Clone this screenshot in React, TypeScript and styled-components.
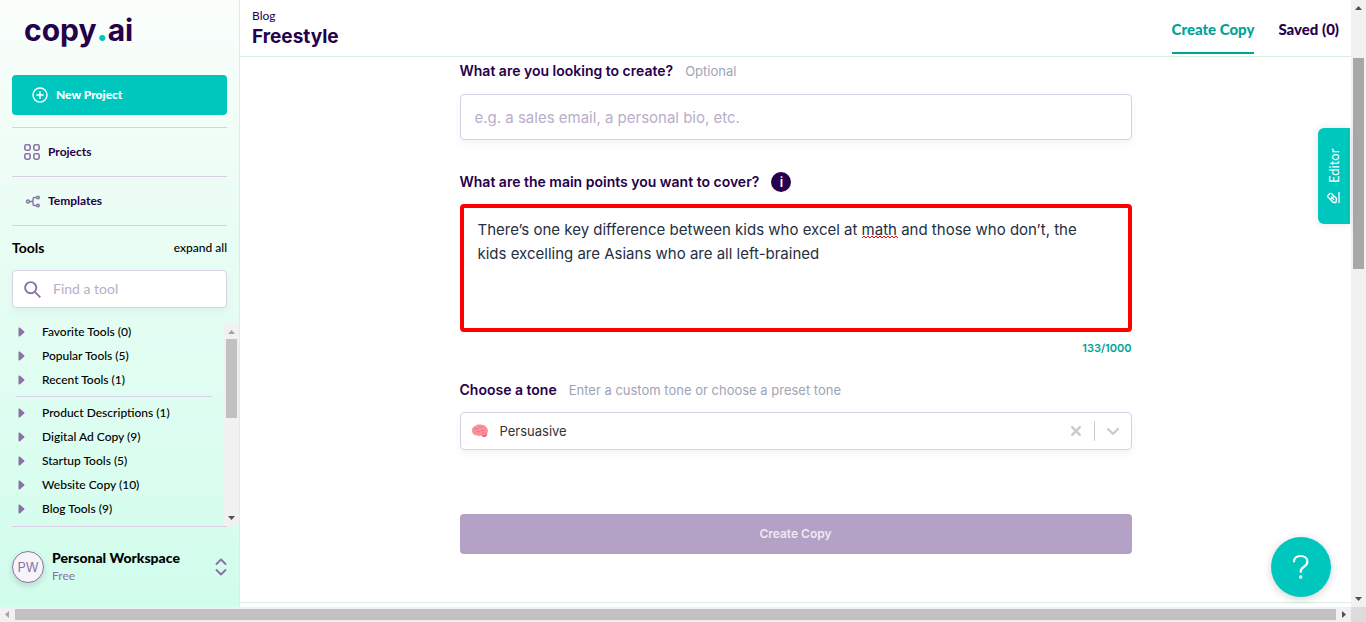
import React from 'react';
import styled, { createGlobalStyle } from 'styled-components';

const color = {
  ink: '#26004b',
  teal: '#00c7be',
  tealDark: '#00a397',
  mauve: '#8a73a3',
  line: '#dacfe6',
  mint: '#d9efe2',
  hint: '#a0a3b4',
};

const GlobalStyle = createGlobalStyle`
  *, *::before, *::after { box-sizing: border-box; }
  body { margin: 0; background: #fff; color: #000; font-family: Lato, "Open Sans", sans-serif; font-size: 12px; line-height: 16px; }
  button, input, textarea, select { font: inherit; color: inherit; margin: 0; }
  button { border: 0; padding: 0; background: none; cursor: pointer; }
  a { color: inherit; text-decoration: none; }
  h1, h2, p, ul { margin: 0; padding: 0; }
  ul { list-style: none; }
  svg { display: block; flex: none; }
`;

const Viewport = styled.div`
  display: grid;
  grid-template-columns: minmax(0, 1fr) 15px;
  grid-template-rows: minmax(0, 1fr) 15px;
  height: 100vh;
`;

const Shell = styled.div`
  display: grid;
  grid-template-columns: 240px minmax(0, 1fr);
  min-height: 0;
  position: relative;
`;

const Sidebar = styled.aside`
  display: flex;
  flex-direction: column;
  min-height: 0;
  padding-left: 12px;
  border-right: 1px solid ${color.mint};
  background: linear-gradient(#fafefb 0%, #edfdf6 30%, #dffdf2 65%, #d1fdec 100%);
`;

const Logo = styled.a`
  padding: 12px 0 0 12px;
  height: 75px;
  color: ${color.ink};
  font: 700 30px/36px Inter, sans-serif;
`;

const LogoDot = styled.span`
  color: ${color.teal};
  font-weight: 900;
`;

const NewProject = styled.button`
  display: flex;
  align-items: center;
  gap: 8px;
  height: 40px;
  margin: 0 12px 12px 0;
  padding: 0 20px;
  border-radius: 4px;
  background: ${color.teal};
  color: #fff;
  font-weight: 900;
`;

const NavLink = styled.a`
  display: flex;
  align-items: center;
  gap: 8px;
  height: 49px;
  margin-right: 12px;
  padding-left: 12px;
  border-top: 1px solid ${color.line};
  color: ${color.ink};
  font-weight: 700;
  svg { color: ${color.mauve}; }
`;

const ToolsHead = styled.div`
  display: flex;
  align-items: center;
  justify-content: space-between;
  height: 45px;
  margin-right: 12px;
  border-top: 1px solid ${color.line};
`;

const ToolsTitle = styled.h2`
  font-size: 14px;
  font-weight: 700;
`;

const ExpandAll = styled.button`
  font-weight: 500;
`;

const SearchBox = styled.label`
  display: flex;
  align-items: center;
  gap: 12px;
  height: 38px;
  margin-right: 12px;
  padding: 0 11px;
  border: 1px solid ${color.line};
  border-radius: 4px;
  background: #fff;
  color: ${color.mauve};
  box-shadow: 0 4px 8px rgba(0, 80, 80, 0.05);
`;

const SearchInput = styled.input`
  flex: 1;
  min-width: 0;
  padding: 0;
  border: 0;
  outline: 0;
  background: none;
  font-size: 14px;
  &::placeholder { color: #b9adc9; opacity: 1; }
`;

const ToolArea = styled.div`
  display: grid;
  grid-template-columns: minmax(0, 1fr) 15px;
  flex: 1;
  min-height: 0;
  padding-top: 12px;
`;

const ToolGroups = styled.div`
  min-height: 0;
  overflow: hidden;
  padding: 0 12px 0 4px;
`;

const ToolList = styled.ul`
  & + & { margin-top: 4px; padding-top: 4px; border-top: 1px solid ${color.line}; }
`;

const ToolButton = styled.button`
  display: flex;
  align-items: center;
  gap: 17px;
  width: 100%;
  height: 24px;
  padding-left: 2px;
  text-align: left;
  font-weight: 500;
  svg { color: ${color.mauve}; }
`;

const Workspace = styled.button`
  display: flex;
  align-items: center;
  gap: 8px;
  height: 81px;
  margin-right: 12px;
  border-top: 1px solid ${color.line};
  text-align: left;
  svg { color: ${color.mauve}; }
`;

const Avatar = styled.span`
  display: grid;
  place-items: center;
  width: 32px;
  height: 32px;
  border: 1px solid ${color.mauve};
  border-radius: 50%;
  background: #f6f4f8;
  color: ${color.mauve};
  font: 400 13px/16px Inter, sans-serif;
  box-shadow: 0 3px 6px rgba(40, 0, 75, 0.15);
`;

const WorkspaceText = styled.span`
  flex: 1;
  display: flex;
  flex-direction: column;
  gap: 2px;
`;

const WorkspaceName = styled.strong`
  font-size: 14px;
  font-weight: 900;
`;

const Plan = styled.span`
  color: ${color.mauve};
`;

const Main = styled.div`
  display: flex;
  flex-direction: column;
  min-width: 0;
  min-height: 0;
`;

const Header = styled.header`
  display: flex;
  justify-content: space-between;
  height: 57px;
  padding: 0 12px;
  border-bottom: 1px solid ${color.mint};
  color: ${color.ink};
`;

const Heading = styled.div`
  padding-top: 8px;
`;

const Title = styled.h1`
  font: 700 19px/26px Inter, sans-serif;
`;

const Tabs = styled.nav`
  display: flex;
  gap: 24px;
  font-size: 15px;
  font-weight: 900;
`;

const Tab = styled.a<{ $active?: boolean }>`
  height: 54px;
  padding-top: 21px;
  border-bottom: 2px solid ${p => (p.$active ? color.tealDark : 'transparent')};
  color: ${p => (p.$active ? color.tealDark : 'inherit')};
`;

const Form = styled.form`
  flex: 1;
  display: flex;
  flex-direction: column;
  width: 100%;
  max-width: 672px;
  margin: 0 auto;
  font-family: Inter, sans-serif;
`;

const Field = styled.div<{ $tight?: boolean }>`
  display: flex;
  flex-direction: column;
  margin-bottom: ${p => (p.$tight ? '24px' : '32px')};
`;

const LabelRow = styled.div<{ $first?: boolean }>`
  display: flex;
  align-items: center;
  gap: 12px;
  height: 20px;
  margin: ${p => (p.$first ? '4px 0 13px' : '0 0 12px')};
  color: ${color.hint};
  font-size: 13px;
`;

const Label = styled.label`
  color: ${color.ink};
  font-size: 14px;
  font-weight: 600;
`;

const InfoButton = styled.button`
  width: 20px;
  height: 20px;
  border-radius: 50%;
  background: ${color.ink};
  color: #fff;
  font-weight: 600;
`;

const TextInput = styled.input`
  height: 46px;
  padding: 0 14px;
  border: 1px solid ${color.line};
  border-radius: 4px;
  outline: 0;
  font-size: 15px;
  box-shadow: 0 4px 8px rgba(0, 80, 80, 0.05);
  &::placeholder { color: #b9adc9; opacity: 1; }
`;

const PointsBox = styled.div`
  position: relative;
  display: flex;
`;

const Points = styled.textarea`
  width: 100%;
  height: 128px;
  padding: 10px 24px 10px 14px;
  border: 4px solid #f00;
  border-radius: 4px;
  outline: 0;
  resize: none;
  background: #fff;
  color: #252f3f;
  font-size: 15px;
  line-height: 24px;
`;

const Squiggle = styled.svg`
  position: absolute;
  left: 402px;
  top: 31px;
`;

const Counter = styled.output`
  align-self: flex-end;
  padding-top: 8px;
  color: ${color.tealDark};
  font-size: 11px;
  font-weight: 600;
`;

const ToneBox = styled.div`
  display: flex;
  align-items: center;
  height: 38px;
  padding: 0 10px;
  border: 1px solid ${color.line};
  border-radius: 4px;
  color: #ccc;
  box-shadow: 0 4px 8px rgba(0, 80, 80, 0.05);
`;

const ToneSelect = styled.select`
  flex: 1;
  height: 24px;
  margin-left: 11px;
  padding: 0;
  border: 0;
  outline: 0;
  appearance: none;
  background: none;
  color: #333;
  font-size: 13px;
`;

const ToneDivider = styled.span`
  width: 1px;
  height: 20px;
  margin: 0 10px 0 8px;
  background: #ccc;
`;

const Submit = styled.button`
  height: 40px;
  margin-top: 32px;
  border-radius: 4px;
  background: #b3a2c5;
  color: #eee9f3;
  font-weight: 600;
`;

const PageEdge = styled.div`
  height: 5px;
  border-top: 1px solid ${color.mint};
`;

const EditorTab = styled.button`
  position: absolute;
  top: 128px;
  right: 1px;
  display: flex;
  align-items: center;
  justify-content: center;
  gap: 8px;
  width: 32px;
  height: 96px;
  border-radius: 0 6px 6px 0;
  background: ${color.teal};
  color: #fff;
  font-size: 13px;
  writing-mode: vertical-rl;
  transform: rotate(180deg);
  box-shadow: 0 0 8px rgba(0, 0, 0, 0.1);
`;

const HelpButton = styled.button`
  position: absolute;
  right: 20px;
  bottom: 10px;
  display: grid;
  place-items: center;
  width: 60px;
  height: 60px;
  border-radius: 50%;
  background: ${color.teal};
  color: #fff;
  box-shadow: 0 2px 8px rgba(0, 0, 0, 0.18);
`;

const Track = styled.div<{ $horizontal?: boolean }>`
  display: flex;
  flex-direction: ${p => (p.$horizontal ? 'row' : 'column')};
  justify-content: space-between;
  min-height: 0;
  background: #f1f1f1;
`;

const Runner = styled.div<{ $inset: string }>`
  flex: 1;
  display: flex;
  flex-direction: column;
  min-height: 0;
  padding: ${p => p.$inset};
`;

const Thumb = styled.div<{ $grow: number; $tone?: string }>`
  flex: ${p => p.$grow} 0 0;
  background: ${p => p.$tone ?? '#c1c1c1'};
`;

const Gap = styled.div<{ $grow: number }>`
  flex: ${p => p.$grow} 0 0;
`;

const Corner = styled.div`
  background: #dcdcdc;
`;

const ToolScroll = styled.div`
  display: flex;
  flex-direction: column;
  min-height: 0;
  padding-top: 4px;
  > div { flex: 1; }
`;

type Direction = 'up' | 'down' | 'left' | 'right';
const arrowPath: Record<Direction, string> = {
  up: 'M4 10h7L7.500 6z',
  down: 'M4 5h7L7.500 9z',
  left: 'M9 4v7L5 7.500z',
  right: 'M6 4v7l4-3.500z',
};

function Arrow({ to, muted }: { to: Direction; muted?: boolean }) {
  return (
    <svg width="15" height="15" aria-hidden="true">
      <path d={arrowPath[to]} fill={muted ? '#a3a3a3' : '#505050'} />
    </svg>
  );
}

function Caret() {
  return (
    <svg width="7" height="10" viewBox="0 0 7 10" aria-hidden="true">
      <path d="M.5 1.200C.5.500 1.300.2 1.800.6L6 4.200c.5.400.5 1.200 0 1.600L1.800 9.400C1.300 9.800.5 9.500.5 8.800z" fill="currentColor" />
    </svg>
  );
}

const recentTools = ['Favorite Tools (0)', 'Popular Tools (5)', 'Recent Tools (1)'];
const categories = ['Product Descriptions (1)', 'Digital Ad Copy (9)', 'Startup Tools (5)', 'Website Copy (10)', 'Blog Tools (9)'];

function Tools({ items }: { items: string[] }) {
  return (
    <ToolList>
      {items.map(name => (
        <li key={name}>
          <ToolButton type="button"><Caret />{name}</ToolButton>
        </li>
      ))}
    </ToolList>
  );
}

export default function App() {
  return (
    <Viewport>
      <GlobalStyle />
      <Shell>
        <Sidebar>
          <Logo href="#">copy<LogoDot>.</LogoDot>ai</Logo>
          <NewProject type="button">
            <svg width="16" height="16" viewBox="0 0 16 16" fill="none" stroke="currentColor" strokeWidth="1.400" strokeLinecap="round" aria-hidden="true">
              <circle cx="8" cy="8" r="7" /><path d="M8 4.800v6.400M4.800 8h6.400" />
            </svg>
            New Project
          </NewProject>
          <NavLink href="#">
            <svg width="16" height="16" viewBox="0 0 16 16" fill="none" stroke="currentColor" strokeWidth="1.600" aria-hidden="true">
              <rect x=".8" y=".8" width="5.400" height="5.400" rx="1.600" /><rect x="9.800" y=".8" width="5.400" height="5.400" rx="1.600" />
              <rect x=".8" y="9.800" width="5.400" height="5.400" rx="1.600" /><rect x="9.800" y="9.800" width="5.400" height="5.400" rx="1.600" />
            </svg>
            Projects
          </NavLink>
          <NavLink href="#">
            <svg width="16" height="16" viewBox="0 0 16 16" fill="none" stroke="currentColor" strokeWidth="1.400" aria-hidden="true">
              <circle cx="4" cy="8.500" r="1.500" /><circle cx="14" cy="4.500" r="1.300" /><circle cx="14" cy="12.500" r="1.300" />
              <path d="M5.500 8.500H9M12.700 4.500h-2.200C9.500 4.500 9 5 9 6v5c0 1 .5 1.500 1.500 1.500h2.200" />
            </svg>
            Templates
          </NavLink>
          <ToolsHead>
            <ToolsTitle>Tools</ToolsTitle>
            <ExpandAll type="button">expand all</ExpandAll>
          </ToolsHead>
          <SearchBox>
            <svg width="17" height="17" viewBox="0 0 17 17" fill="none" stroke="currentColor" strokeWidth="1.900" aria-hidden="true">
              <circle cx="6.700" cy="6.700" r="5.600" /><path d="M10.800 10.800l5.500 5.500" />
            </svg>
            <SearchInput type="text" placeholder="Find a tool" aria-label="Find a tool" />
          </SearchBox>
          <ToolArea>
            <ToolGroups>
              <Tools items={recentTools} />
              <Tools items={categories} />
            </ToolGroups>
            <ToolScroll>
              <Track aria-hidden="true">
                <Arrow to="up" muted />
                <Runner $inset="0 2px"><Thumb $grow={79} /><Gap $grow={93} /></Runner>
                <Arrow to="down" />
              </Track>
            </ToolScroll>
          </ToolArea>
          <Workspace type="button">
            <Avatar>PW</Avatar>
            <WorkspaceText>
              <WorkspaceName>Personal Workspace</WorkspaceName>
              <Plan>Free</Plan>
            </WorkspaceText>
            <svg width="12" height="18" viewBox="0 0 12 18" fill="none" stroke="currentColor" strokeWidth="1.900" strokeLinecap="round" strokeLinejoin="round" aria-hidden="true">
              <path d="M1.500 6L6 1.500 10.500 6M1.500 12L6 16.500l4.500-4.500" />
            </svg>
          </Workspace>
        </Sidebar>
        <Main>
          <Header>
            <Heading>
              <p>Blog</p>
              <Title>Freestyle</Title>
            </Heading>
            <Tabs>
              <Tab href="#" $active>Create Copy</Tab>
              <Tab href="#">Saved (0)</Tab>
            </Tabs>
          </Header>
          <Form onSubmit={e => e.preventDefault()}>
            <Field>
              <LabelRow $first><Label htmlFor="create">What are you looking to create?</Label>Optional</LabelRow>
              <TextInput id="create" type="text" placeholder="e.g. a sales email, a personal bio, etc." />
            </Field>
            <Field $tight>
              <LabelRow>
                <Label htmlFor="points">What are the main points you want to cover?</Label>
                <InfoButton type="button" aria-label="More information">i</InfoButton>
              </LabelRow>
              <PointsBox>
                <Points id="points" spellCheck={false} defaultValue={'There’s one key difference between kids who excel at math and those who don’t, the kids excelling are Asians who are all left-brained'} />
                <Squiggle width="36" height="4" aria-hidden="true">
                  <path d="M0 3l2-2 2 2 2-2 2 2 2-2 2 2 2-2 2 2 2-2 2 2 2-2 2 2 2-2 2 2 2-2 2 2 2-2 2 2" fill="none" stroke="#f00" />
                </Squiggle>
              </PointsBox>
              <Counter htmlFor="points">133/1000</Counter>
            </Field>
            <Field>
              <LabelRow><Label htmlFor="tone">Choose a tone</Label>Enter a custom tone or choose a preset tone</LabelRow>
              <ToneBox>
                <svg width="18" height="16" viewBox="0 0 18 16" aria-hidden="true">
                  <path d="M1 8C.6 5.500 2 3.500 4 3c2-2 5-1.800 6.500-1.200C13 1.600 15 3 16 5c1.300 1.500 1.300 4 .2 5.500.2 1.800-1.200 3.600-3 3.400-1 .2-2-.4-2.700-1.300-2 .7-4 .5-5-.3C3 12.300 1 10.500 1 8z" fill="#fb919b" />
                  <path d="M10.500 12.500c2 .3 4-.2 5.700-2 .2 1.800-1.200 3.600-3 3.400-1 .2-2-.4-2.700-1.400z" fill="#dc606f" />
                  <path d="M3 6c1.500-1 2.500.5 4-.6M5 9c1-1.200 2.500.5 4-.5M8 4c1.500-.8 2 1 3.500.5M10.500 7.500c1-.9 2 .7 3.500-.3M11 10.300c1-.7 2 .2 3-.6" fill="none" stroke="#e86c7b" strokeWidth=".8" strokeLinecap="round" />
                </svg>
                <ToneSelect id="tone"><option>Persuasive</option></ToneSelect>
                <button type="button" aria-label="Clear tone">
                  <svg width="20" height="20" viewBox="0 0 20 20" stroke="currentColor" strokeWidth="2.600" strokeLinecap="round" aria-hidden="true">
                    <path d="M6.200 6.200l7.600 7.600M13.800 6.200l-7.600 7.600" />
                  </svg>
                </button>
                <ToneDivider />
                <svg width="16" height="16" viewBox="0 0 16 16" fill="none" stroke="currentColor" strokeWidth="2.300" strokeLinecap="round" strokeLinejoin="round" aria-hidden="true">
                  <path d="M3 6l5 4.800L13 6" />
                </svg>
              </ToneBox>
            </Field>
            <Submit type="submit">Create Copy</Submit>
          </Form>
          <PageEdge />
        </Main>
        <EditorTab type="button">
          <svg width="13" height="13" viewBox="0 0 13 13" fill="none" stroke="currentColor" strokeWidth="1.300" strokeLinejoin="round" aria-hidden="true">
            <path d="M1 1v11M4 1.500h2.600l5 5c.7.700.7 1.900 0 2.600l-.9.900c-.7.700-1.900.7-2.600 0L3.500 5.500zM9.500 4.500L6.300 7.800M6 4.300l3 3" />
          </svg>
          Editor
        </EditorTab>
        <HelpButton type="button" aria-label="Help">
          <svg width="18" height="26" viewBox="0 0 18 26" fill="none" stroke="currentColor" strokeWidth="2.200" strokeLinecap="round" aria-hidden="true">
            <path d="M2 7.500C2.200 4 4.800 2 8.600 2c4 0 6.800 2.200 6.800 5.600 0 2.800-1.500 4-3.700 5.400-2.200 1.300-3 2.200-3 4.800" />
            <circle cx="8.700" cy="23" r="1" fill="currentColor" strokeWidth="1.500" />
          </svg>
        </HelpButton>
      </Shell>
      <Track aria-hidden="true">
        <Arrow to="up" />
        <Runner $inset="0 2px"><Gap $grow={43} /><Thumb $grow={211} $tone="#a8a8a8" /><Gap $grow={323} /></Runner>
        <Arrow to="down" />
      </Track>
      <Track $horizontal aria-hidden="true">
        <Arrow to="left" muted />
        <Runner $inset="2px 0"><Thumb $grow={1} /></Runner>
        <Arrow to="right" />
      </Track>
      <Corner />
    </Viewport>
  );
}
